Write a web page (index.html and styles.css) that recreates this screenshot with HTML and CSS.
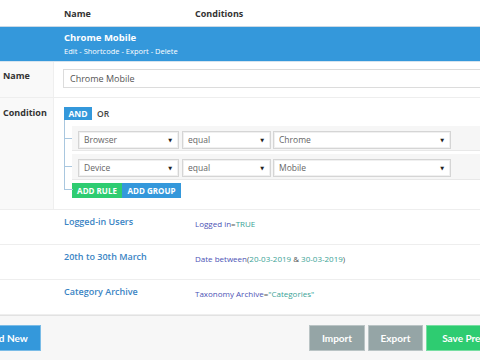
FILE: index.html
```html
<!DOCTYPE html>
<html>
<head>
<meta charset="utf-8">
<link rel="stylesheet" href="styles.css">
</head>
<body>
<div class="page">
  <div class="row thead">
    <div class="c0"></div>
    <div class="c1">Name</div>
    <div class="c2">Conditions</div>
  </div>
  <div class="row selrow">
    <div class="c0"></div>
    <div class="c1">
      <div class="title">Chrome Mobile</div>
      <div class="actions">Edit - Shortcode - Export - Delete</div>
    </div>
  </div>
  <div class="editor">
    <div class="erow erow-name">
      <div class="label">Name</div>
      <div class="field"><div class="input">Chrome Mobile</div></div>
    </div>
    <div class="erow erow-cond">
      <div class="label">Condition</div>
      <div class="field">
        <div class="group-head">
          <span class="btn-and">AND</span><span class="btn-or">OR</span>
        </div>
        <div class="tree">
          <div class="rule">
            <div class="select s1">Browser<span class="arr">▼</span></div>
            <div class="select s2">equal<span class="arr">▼</span></div>
            <div class="select s3">Chrome<span class="arr">▼</span></div>
          </div>
          <div class="rule">
            <div class="select s1">Device<span class="arr">▼</span></div>
            <div class="select s2">equal<span class="arr">▼</span></div>
            <div class="select s3">Mobile<span class="arr">▼</span></div>
          </div>
          <div class="add-btns">
            <span class="btn-rule">ADD RULE</span><span class="btn-group">ADD GROUP</span>
          </div>
        </div>
      </div>
    </div>
  </div>
  <div class="row lrow">
    <div class="c0"></div>
    <div class="c1 lname">Logged-in Users</div>
    <div class="c2 cond"><span class="k">Logged in</span>=<span class="v">TRUE</span></div>
  </div>
  <div class="row lrow">
    <div class="c0"></div>
    <div class="c1 lname">20th to 30th March</div>
    <div class="c2 cond"><span class="k">Date between</span>(<span class="v">20-03-2019</span> &amp; <span class="v">30-03-2019</span>)</div>
  </div>
  <div class="row lrow">
    <div class="c0"></div>
    <div class="c1 lname">Category Archive</div>
    <div class="c2 cond"><span class="k">Taxonomy Archive</span>=<span class="v">"Categories"</span></div>
  </div>
  <div class="footer">
    <span class="fbtn add">Add New</span>
    <div class="fright">
      <span class="fbtn grey imp">Import</span>
      <span class="fbtn grey exp">Export</span>
      <span class="fbtn green">Save Preset</span>
    </div>
  </div>
</div>
</body>
</html>
```

FILE: styles.css
```css
html, body {
  margin: 0;
  padding: 0;
  background: #ffffff;
  overflow: hidden;
}
body {
  width: 480px;
  height: 360px;
  font-family: "Open Sans", "DejaVu Sans", sans-serif;
  color: #444;
}
.page {
  width: 480px;
}
.row {
  display: grid;
  grid-template-columns: 53px 142px 1fr;
}
.c1 {
  padding-left: 11px;
}
.thead {
  height: 26px;
  align-items: center;
  font-weight: 700;
  font-size: 9px;
  color: #333;
  border-bottom: 1px solid #c9d9e6;
}
.selrow {
  background: #3498db;
  color: #fff;
  height: 34px;
  border-bottom: 1px solid #d6e4ef;
}
.selrow .c1 {
  grid-column: 2 / 4;
  padding-top: 4px;
}
.title {
  font-weight: 700;
  font-size: 9.5px;
  line-height: 13px;
}
.actions {
  font-size: 7.5px;
  line-height: 12px;
  margin-top: 1px;
}
.erow {
  display: flex;
  border-bottom: 1px solid #eeeeee;
}
.label {
  width: 50px;
  flex: none;
  background: #f9f9f9;
  border-right: 1px solid #efefef;
  padding-left: 3px;
  font-weight: 700;
  font-size: 9px;
  color: #333;
}
.field {
  flex: 1;
  padding-left: 9px;
}
.erow-name {
  height: 35px;
}
.erow-name .label {
  padding-top: 7px;
}
.erow-name .field {
  padding-top: 7px;
}
.input {
  height: 17px;
  border: 1px solid #dcdcdc;
  border-right: none;
  font-size: 9px;
  line-height: 17px;
  padding-left: 6px;
  color: #555;
  margin-right: -10px;
}
.erow-cond {
  height: 111px;
}
.erow-cond .label {
  padding-top: 8px;
}
.erow-cond .field {
  padding-top: 9px;
  padding-left: 10px;
}
.group-head {
  display: flex;
  align-items: center;
  height: 13px;
}
.btn-and {
  background: #3498db;
  color: #fff;
  font-weight: 700;
  font-size: 8.5px;
  width: 28px;
  height: 13px;
  line-height: 13px;
  text-align: center;
}
.btn-or {
  font-size: 8.5px;
  font-weight: 600;
  color: #444;
  margin-left: 5px;
}
.tree {
  position: relative;
  padding-left: 8px;
  padding-top: 6px;
}
.tree::before {
  content: "";
  position: absolute;
  left: 0;
  top: 0;
  width: 8px;
  bottom: 8px;
  border-left: 1px solid #a9c7df;
  border-bottom: 1px solid #a9c7df;
}
.rule {
  position: relative;
  display: flex;
  height: 25px;
  background: #f6f6f6;
  border-bottom: 1px solid #e8e8e8;
  margin-bottom: 3px;
  padding: 5px 0 0 6px;
  box-sizing: border-box;
  margin-right: -10px;
}
.rule::before {
  content: "";
  position: absolute;
  left: -8px;
  top: 12px;
  width: 8px;
  border-top: 1px solid #a9c7df;
}
.rule + .rule {
  height: 26px;
}
.select {
  position: relative;
  box-sizing: border-box;
  height: 18px;
  border: 1px solid #d5d5d5;
  background: #fff;
  box-shadow: inset 0 0 0 1px #f0f0f0;
  font-size: 8.5px;
  line-height: 16px;
  padding-left: 5px;
  color: #666;
  margin-right: 3px;
}
.s1 { width: 101px; }
.s2 { width: 89px; margin-right: 2px; }
.s3 { width: 178px; }
.arr {
  position: absolute;
  right: 6px;
  top: 0;
  font-size: 5px;
  color: #222;
}
.add-btns {
  display: flex;
  margin-top: 1px;
  height: 15px;
}
.btn-rule, .btn-group {
  color: #fff;
  font-weight: 700;
  font-size: 8px;
  line-height: 15px;
  text-align: center;
}
.btn-rule {
  background: #2ecc71;
  width: 50px;
}
.btn-group {
  background: #3498db;
  width: 59px;
}
.lrow {
  height: 34px;
  border-bottom: 1px solid #eeeeee;
}
.lname {
  font-size: 9px;
  font-weight: 600;
  color: #3a84c4;
  padding-top: 5px;
}
.cond {
  font-size: 8px;
  color: #555;
  padding-top: 8px;
}
.k { color: #4c52b5; }
.v { color: #3aa396; }
.footer {
  height: 45px;
  background: #f7f7f7;
  border-top: 1px solid #e2e2e2;
  display: flex;
  justify-content: space-between;
  padding-top: 9px;
  box-sizing: border-box;
}
.fright {
  display: flex;
  gap: 3px;
  margin-right: -30px;
}
.fbtn {
  font-family: "Lato", sans-serif;
  font-weight: 700;
  font-size: 10px;
  color: #fff;
  height: 26px;
  line-height: 24px;
  box-sizing: border-box;
  text-align: center;
  border: 1px solid rgba(255,255,255,0.35);
}
.add {
  background: #3498db;
  width: 68px;
  margin-left: -27px;
}
.grey { background: #95a5a6; }
.imp { width: 56px; }
.exp { width: 55px; }
.green {
  background: #2ecc71;
  width: 84px;
}
```
